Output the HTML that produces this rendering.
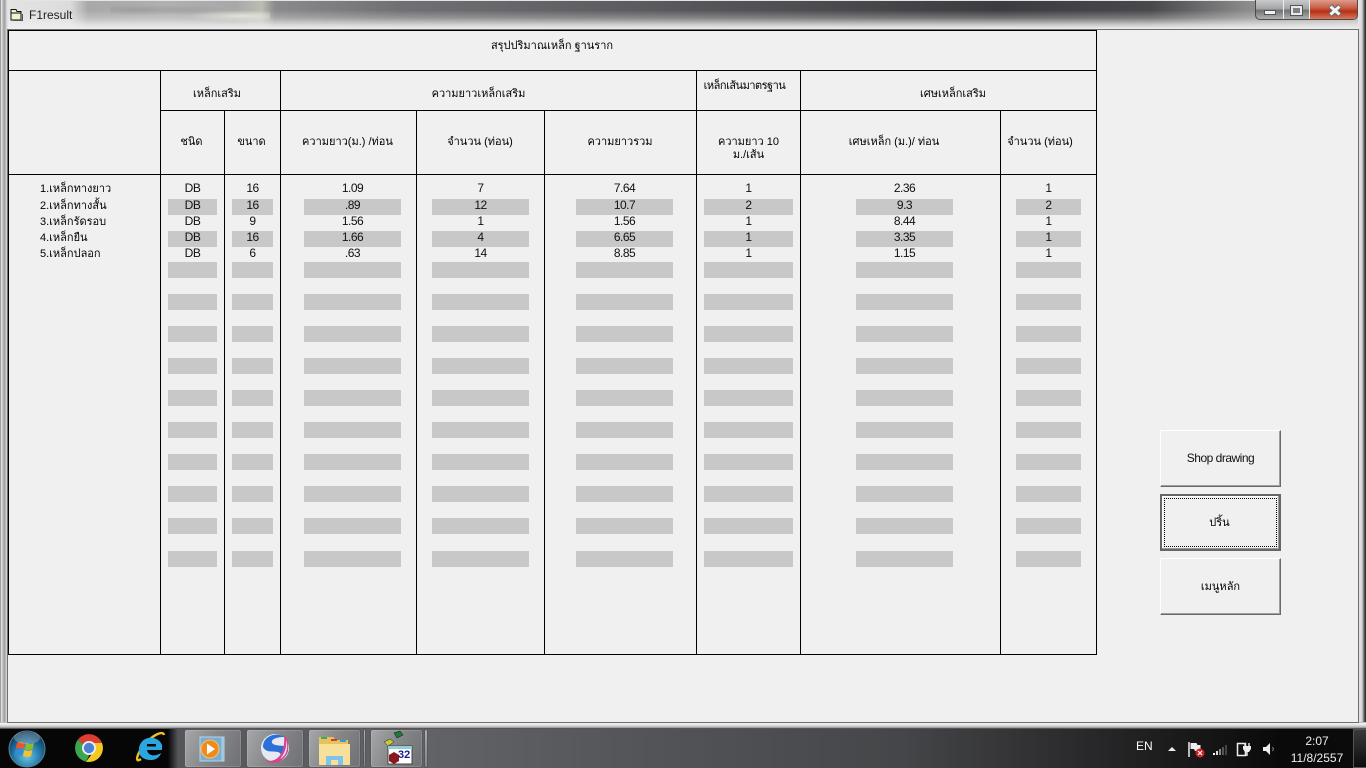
<!DOCTYPE html>
<html><head><meta charset="utf-8"><title>F1result</title>
<style>
html,body{margin:0;padding:0;width:1366px;height:768px;overflow:hidden;background:#000}
body{position:relative;font:11px "Liberation Sans","Noto Sans CJK SC",sans-serif;color:#000}
div{position:absolute;box-sizing:border-box}
.h{background:#000;height:1px}.v{background:#000;width:1px}
.t{text-align:center;white-space:nowrap;line-height:14px;height:14px}
.d{font-size:12px;letter-spacing:-.5px;color:#111}
.b{top:199px;height:368px;background:linear-gradient(#c8c8c8 0 16px,transparent 16px 32px,#c8c8c8 32px 48px,transparent 48px 63px,#c8c8c8 63px 79px,transparent 79px 95px,#c8c8c8 95px 111px,transparent 111px 127px,#c8c8c8 127px 143px,transparent 143px 159px,#c8c8c8 159px 175px,transparent 175px 191px,#c8c8c8 191px 207px,transparent 207px 223px,#c8c8c8 223px 239px,transparent 239px 255px,#c8c8c8 255px 271px,transparent 271px 287px,#c8c8c8 287px 303px,transparent 303px 319px,#c8c8c8 319px 335px,transparent 335px 352px,#c8c8c8 352px 368px)}
.btn{left:1160px;width:121px;height:57px;background:#f0f0f0;border:1px solid;border-color:#fff #696969 #696969 #fff;box-shadow:inset -1px -1px 0 #a0a0a0;text-align:center;line-height:56px}
.tb{top:729px;height:39px;border:1px solid #55575a;border-radius:3px;background:linear-gradient(115deg,#a6a7a9,#86888a 45%,#737477 90%);box-shadow:inset 0 0 0 1px rgba(255,255,255,.14)}
</style></head><body>
<div style="left:0;top:0;width:1366px;height:728px;border-radius:6px 6px 0 0;background:#d8d8d8"></div>
<div style="left:0;top:0;width:1366px;height:31px;border-radius:6px 6px 0 0;background:linear-gradient(90deg,#e4e4e4 0,#dcdcdc 70px,#a8a8a8 88px,#b0b0b0 170px,#a8a8a8 235px,#bcbcb4 262px,#8a8a8c 275px,#707074 400px,#56565a 700px,#3c3c40 1000px,#48484c 1150px,#8c8c8c 1250px,#a8a8a8 1366px)"></div>
<div style="left:0;top:0;width:1366px;height:31px;border-radius:6px 6px 0 0;background:linear-gradient(rgba(238,238,238,0) 0,rgba(238,238,238,0) 9px,rgba(238,238,238,.3) 17px,rgba(238,238,238,.8) 24px,#eee 28px);border-top:1px solid #e4e4e4"></div>
<div style="left:110px;top:3px;width:160px;height:20px;background:radial-gradient(ellipse at 82% 65%,rgba(240,240,228,.75) 0,rgba(240,240,228,0) 30%),radial-gradient(ellipse at 18% 35%,rgba(110,110,110,.25) 0,rgba(110,110,110,0) 30%),radial-gradient(ellipse at 50% 35%,rgba(120,120,120,.2) 0,rgba(120,120,120,0) 30%)"></div>
<div style="left:0;top:0;width:8px;height:728px;background:linear-gradient(90deg,#555 0,#e8e8e8 1px,#d4d4d4 2px,#a0a0a0 4px,#aaa 5px,#e0e0e0 7px)"></div>
<div style="left:1358px;top:0;width:8px;height:728px;background:linear-gradient(90deg,#e8e8e8 0,#d6d6d6 4px,#666 6px,#222)"></div>
<div style="left:0;top:722px;width:1366px;height:7px;background:linear-gradient(#8a8a8a 0,#f4f4f4 1px,#e4e4e4 3px,#b8b8b8 5px,#8a8a8a 6px,#333)"></div>

<div style="left:7px;top:29px;width:1352px;height:694px;background:#f0f0f0;border:1px solid #6e6e6e"></div>

<svg style="position:absolute;left:9px;top:8px" width="15" height="15" viewBox="0 0 15 15"><path d="M2 3.5V1.5h5l1 2h4v8.5H2z" fill="#f4f0d0" stroke="#111"/><path d="M2 5h10" stroke="#111"/><path d="M4 12.5h9.5V6" fill="none" stroke="#555"/></svg>
<div style="left:29px;top:8px;line-height:14px;font-size:12px;color:#222">F1result</div>

<div style="left:1255px;top:0;width:103px;height:20px;border:1px solid #4a4a4a;border-top:0;border-radius:0 0 5px 5px;background:linear-gradient(#c8cacc,#a4a6a8 45%,#707274 55%,#b0b2b4);overflow:hidden">
<div style="left:27px;top:0;width:27px;height:19px;border-left:1px solid #eee;border-right:1px solid #eee"></div>
<div style="left:54px;top:0;width:48px;height:19px;background:linear-gradient(#dc9c8c,#c9604a 40%,#b82f16 60%,#d77a5c)"></div>
</div>
<div style="left:1264px;top:10px;width:12px;height:5px;background:#f2f2f2;border:1px solid #555"></div>
<div style="left:1291px;top:6px;width:11px;height:9px;border:2px solid #e8e8e8;outline:1px solid #555;background:#7d8084"></div>
<svg style="position:absolute;left:1327px;top:4px" width="16" height="13" viewBox="0 0 16 13"><path d="M3 2l10 9M13 2L3 11" stroke="#666" stroke-width="5"/><path d="M3.5 2.5l9 8M12.5 2.5l-9 8" stroke="#f4f4f4" stroke-width="3"/></svg>

<div class="h" style="left:8px;top:30px;width:1089px"></div>
<div class="h" style="left:8px;top:70px;width:1089px"></div>
<div class="h" style="left:160px;top:110px;width:937px"></div>
<div class="h" style="left:8px;top:174px;width:1089px"></div>
<div class="h" style="left:8px;top:654px;width:1089px"></div>
<div class="v" style="left:8px;top:30px;height:625px"></div>
<div class="v" style="left:1096px;top:30px;height:625px"></div>
<div class="v" style="left:160px;top:70px;height:585px"></div>
<div class="v" style="left:224px;top:110px;height:545px"></div>
<div class="v" style="left:280px;top:70px;height:585px"></div>
<div class="v" style="left:416px;top:110px;height:545px"></div>
<div class="v" style="left:544px;top:110px;height:545px"></div>
<div class="v" style="left:696px;top:70px;height:585px"></div>
<div class="v" style="left:800px;top:70px;height:585px"></div>
<div class="v" style="left:1000px;top:110px;height:545px"></div>

<div class="b" style="left:168px;width:49px"></div>
<div class="b" style="left:232px;width:41px"></div>
<div class="b" style="left:304px;width:97px"></div>
<div class="b" style="left:432px;width:97px"></div>
<div class="b" style="left:576px;width:97px"></div>
<div class="b" style="left:704px;width:89px"></div>
<div class="b" style="left:856px;width:97px"></div>
<div class="b" style="left:1016px;width:65px"></div>

<div class="t" style="left:402px;top:39px;width:300px">สรุปปริมาณเหล็ก ฐานราก</div>
<div class="t" style="left:161px;top:87px;width:112px">เหล็กเสริม</div>
<div class="t" style="left:281px;top:87px;width:395px">ความยาวเหล็กเสริม</div>
<div class="t" style="left:693px;top:79px;width:103px;letter-spacing:-.5px">เหล็กเส้นมาตรฐาน</div>
<div class="t" style="left:799px;top:87px;width:308px">เศษเหล็กเสริม</div>
<div class="t" style="left:161px;top:135px;width:61px">ชนิด</div>
<div class="t" style="left:225px;top:135px;width:53px">ขนาด</div>
<div class="t" style="left:281px;top:135px;width:133px">ความยาว(ม.) /ท่อน</div>
<div class="t" style="left:417px;top:135px;width:126px">จำนวน (ท่อน)</div>
<div class="t" style="left:545px;top:135px;width:150px">ความยาวรวม</div>
<div class="t" style="left:697px;top:135px;width:103px">ความยาว 10</div>
<div class="t" style="left:697px;top:148px;width:103px">ม./เส้น</div>
<div class="t" style="left:795px;top:135px;width:198px">เศษเหล็ก (ม.)/ ท่อน</div>
<div class="t" style="left:1001px;top:135px;width:78px">จำนวน (ท่อน)</div>

<div class="t" style="left:40px;top:182px">1.เหล็กทางยาว</div>
<div class="t" style="left:40px;top:199px">2.เหล็กทางสั้น</div>
<div class="t" style="left:40px;top:215px">3.เหล็กรัดรอบ</div>
<div class="t" style="left:40px;top:231px">4.เหล็กยืน</div>
<div class="t" style="left:40px;top:247px">5.เหล็กปลอก</div>

<div class="t d" style="left:168px;top:181px;width:49px">DB</div><div class="t d" style="left:232px;top:181px;width:41px">16</div><div class="t d" style="left:304px;top:181px;width:97px">1.09</div><div class="t d" style="left:432px;top:181px;width:97px">7</div><div class="t d" style="left:576px;top:181px;width:97px">7.64</div><div class="t d" style="left:704px;top:181px;width:89px">1</div><div class="t d" style="left:856px;top:181px;width:97px">2.36</div><div class="t d" style="left:1016px;top:181px;width:65px">1</div>
<div class="t d" style="left:168px;top:198px;width:49px">DB</div><div class="t d" style="left:232px;top:198px;width:41px">16</div><div class="t d" style="left:304px;top:198px;width:97px">.89</div><div class="t d" style="left:432px;top:198px;width:97px">12</div><div class="t d" style="left:576px;top:198px;width:97px">10.7</div><div class="t d" style="left:704px;top:198px;width:89px">2</div><div class="t d" style="left:856px;top:198px;width:97px">9.3</div><div class="t d" style="left:1016px;top:198px;width:65px">2</div>
<div class="t d" style="left:168px;top:214px;width:49px">DB</div><div class="t d" style="left:232px;top:214px;width:41px">9</div><div class="t d" style="left:304px;top:214px;width:97px">1.56</div><div class="t d" style="left:432px;top:214px;width:97px">1</div><div class="t d" style="left:576px;top:214px;width:97px">1.56</div><div class="t d" style="left:704px;top:214px;width:89px">1</div><div class="t d" style="left:856px;top:214px;width:97px">8.44</div><div class="t d" style="left:1016px;top:214px;width:65px">1</div>
<div class="t d" style="left:168px;top:230px;width:49px">DB</div><div class="t d" style="left:232px;top:230px;width:41px">16</div><div class="t d" style="left:304px;top:230px;width:97px">1.66</div><div class="t d" style="left:432px;top:230px;width:97px">4</div><div class="t d" style="left:576px;top:230px;width:97px">6.65</div><div class="t d" style="left:704px;top:230px;width:89px">1</div><div class="t d" style="left:856px;top:230px;width:97px">3.35</div><div class="t d" style="left:1016px;top:230px;width:65px">1</div>
<div class="t d" style="left:168px;top:246px;width:49px">DB</div><div class="t d" style="left:232px;top:246px;width:41px">6</div><div class="t d" style="left:304px;top:246px;width:97px">.63</div><div class="t d" style="left:432px;top:246px;width:97px">14</div><div class="t d" style="left:576px;top:246px;width:97px">8.85</div><div class="t d" style="left:704px;top:246px;width:89px">1</div><div class="t d" style="left:856px;top:246px;width:97px">1.15</div><div class="t d" style="left:1016px;top:246px;width:65px">1</div>

<div class="btn d" style="top:430px;line-height:54px">Shop drawing</div>
<div class="btn" style="top:494px;border:2px solid #666;line-height:54px;box-shadow:inset -1px -1px 0 #9a9a9a,inset 1px 1px 0 #fff;padding-right:2px">ปริ้น<div style="left:2px;top:2px;width:113px;height:49px;border:1px dotted #000"></div></div>
<div class="btn" style="top:558px">เมนูหลัก</div>

<div style="left:0;top:729px;width:1366px;height:39px;background:linear-gradient(90deg,#060606 0,#060606 168px,#55565a 178px,#626366 430px,#55565a 620px,#454649 900px,#2a2a2c 1080px,#0a0a0a 1280px,#0b0b0b)"></div>
<div style="left:0;top:728px;width:1366px;height:1px;background:#555"></div>

<svg style="position:absolute;left:7px;top:729px" width="40" height="39" viewBox="0 0 40 39"><defs><radialGradient id="o" cx=".5" cy=".7" r=".7"><stop offset="0" stop-color="#69c7e8"/><stop offset=".6" stop-color="#1d6c9c"/><stop offset="1" stop-color="#0b2c48"/></radialGradient></defs><circle cx="20" cy="20" r="18" fill="url(#o)" stroke="#5a7f92"/><path d="M10 14q4-2 8 0l-1.3 6q-4-2-8 0z" fill="#e8572d"/><path d="M19 14q4 2 8 0l-1.3 6q-4 2-8 0z" fill="#8bbc2e"/><path d="M8.4 21q4-2 8 0l-1.3 6q-4-2-8 0z" fill="#2e8ed8"/><path d="M17.4 21q4 2 8 0l-1.3 6q-4 2-8 0z" fill="#f4c22d"/><ellipse cx="20" cy="9" rx="13" ry="6" fill="#fff" opacity=".25"/></svg>

<svg style="position:absolute;left:74px;top:733px" width="30" height="30" viewBox="0 0 30 30"><path d="M15 15L3.6 7A14 14 0 0 1 28 10H15z" fill="#dc3f32"/><path d="M15 15L3.6 7A14 14 0 0 0 12 28.7l6-12z" fill="#3ba550"/><path d="M15 10h13A14 14 0 0 1 12 28.7l7.5-10z" fill="#f4c81e"/><circle cx="15" cy="15" r="7" fill="#eee"/><circle cx="15" cy="15" r="5.2" fill="#4b82d8"/></svg>

<svg style="position:absolute;left:135px;top:731px" width="32" height="34" viewBox="0 0 32 34"><path d="M6 28C-1 33 2 22 10 13S28 -1 29 4" fill="none" stroke="#eec11f" stroke-width="2.4"/><path d="M4 20A12 12 0 0 1 27 14v5H12c1 6 8 7 14 3-1 4-5 7-10 7-8 0-12-4-12-9z" fill="#2ba7e0"/><rect x="12" y="13" width="9" height="2.5" fill="#0b0b0b"/></svg>

<div class="tb" style="left:184px;width:58px"></div>
<div class="tb" style="left:246px;width:58px"></div>
<div class="tb" style="left:308px;width:53px"></div>
<div class="tb" style="left:363px;width:3px"></div>
<div class="tb" style="left:370px;width:53px"></div>
<div class="tb" style="left:424px;width:4px"></div>

<svg style="position:absolute;left:198px;top:736px" width="30" height="26" viewBox="0 0 30 26"><rect x="8" y="1" width="18" height="24" fill="#8fbcd8" stroke="#b7d6e8"/><rect x="2" y="1" width="22" height="24" fill="#79aed0" stroke="#b7d6e8"/><circle cx="12" cy="13" r="9" fill="#ef8a1e" stroke="#f8c272"/><path d="M9 7.5l8 5.5-8 5.5z" fill="#fff"/></svg>
<svg style="position:absolute;left:260px;top:732px" width="32" height="34" viewBox="0 0 32 34"><circle cx="15" cy="16" r="14" fill="#e7e9f2"/><path d="M3 15C3 3 18 0 24 5 16 5 9 8 13 12c5 3 15 0 15 6 0 6-7 9-13 10 5-3 8-6 3-8-5-1-12 1-15-5z" fill="#2b6fd8"/><path d="M24 3c7 6 6 23-6 27-6 2-11 0-13-2 8 3 21-2 19-25z" fill="#d9428e"/><path d="M26 8c3 8 0 16-6 19 4-5 7-10 6-19z" fill="#e7e9f2"/></svg>
<svg style="position:absolute;left:318px;top:735px" width="33" height="30" viewBox="0 0 33 30"><path d="M1 2h14l3 3h12v25H1z" fill="#e8c25c"/><rect x="3" y="2" width="6" height="2" fill="#3bb04a"/><rect x="13" y="4" width="6" height="2" fill="#c8463a"/><rect x="22" y="5" width="6" height="2" fill="#3a9ad8"/><rect x="1" y="9" width="31" height="21" fill="#f6e09a"/><path d="M8 30v-9h17v9h-5v-5h-7v5z" fill="#7fc2ea"/></svg>
<svg style="position:absolute;left:379px;top:730px" width="36" height="36" viewBox="0 0 36 36"><path d="M15 3l6-2 3 4-6 3z" fill="#1e7a3a" stroke="#111" stroke-width=".5"/><path d="M5 12l6-3 4 3-6 4z" fill="#c8c83c" stroke="#222" stroke-width=".5"/><rect x="9" y="16" width="24" height="18" fill="#fff" stroke="#444"/><rect x="9" y="16" width="24" height="3" fill="#8fd0d0"/><path d="M10 25l5-3 5 3v6l-5 3-5-3z" fill="#8a1820"/><text x="19" y="28" font-family="Liberation Sans,sans-serif" font-size="11" font-weight="bold" fill="#1a1a9a">32</text></svg>

<div style="left:1136px;top:739px;color:#fff;font-size:12px;line-height:14px">EN</div>
<svg style="position:absolute;left:1167px;top:745px" width="10" height="7" viewBox="0 0 10 7"><path d="M1 6l4-4 4 4z" fill="#eee"/></svg>
<svg style="position:absolute;left:1188px;top:741px" width="18" height="17" viewBox="0 0 18 17"><path d="M1 1v15" stroke="#eee" stroke-width="1.5"/><path d="M2.5 2h6l1 2h3v6H7l-1-2H2.5z" fill="#eee"/><circle cx="12" cy="12" r="4.5" fill="#d21f2a"/><path d="M10 10l4 4M14 10l-4 4" stroke="#fff" stroke-width="1.2"/></svg>
<svg style="position:absolute;left:1212px;top:744px" width="16" height="12" viewBox="0 0 16 12"><rect x="1" y="9" width="2" height="2" fill="#fff"/><rect x="4" y="7" width="2" height="4" fill="#ddd"/><rect x="7" y="5" width="2" height="6" fill="#888"/><rect x="10" y="3" width="2" height="8" fill="#555"/><rect x="13" y="1" width="2" height="10" fill="#444"/></svg>
<svg style="position:absolute;left:1236px;top:741px" width="16" height="16" viewBox="0 0 16 16"><rect x="1.5" y="2.5" width="8" height="12" fill="#111" stroke="#eee" stroke-width="1.5"/><path d="M7 5h8v3l-2 3h-4L7 8z" fill="#eee"/><path d="M9 2v3M13 2v3M11 11v4" stroke="#eee" stroke-width="1.4"/></svg>
<svg style="position:absolute;left:1262px;top:742px" width="14" height="14" viewBox="0 0 14 14"><path d="M1 5h3l4-4v12L4 9H1z" fill="#eee"/><path d="M10.5 5q1.5 2 0 4" fill="none" stroke="#888"/></svg>

<div style="left:1292px;top:734px;width:50px;text-align:center;color:#eee;font-size:12px;line-height:14px">2:07</div>
<div style="left:1285px;top:751px;width:64px;text-align:center;color:#eee;font-size:12px;line-height:14px">11/8/2557</div>
<div style="left:1353px;top:729px;width:13px;height:39px;border:1px solid #555;border-right:0;background:linear-gradient(#3a3a3a,#0c0c0c)"></div>
</body></html>
